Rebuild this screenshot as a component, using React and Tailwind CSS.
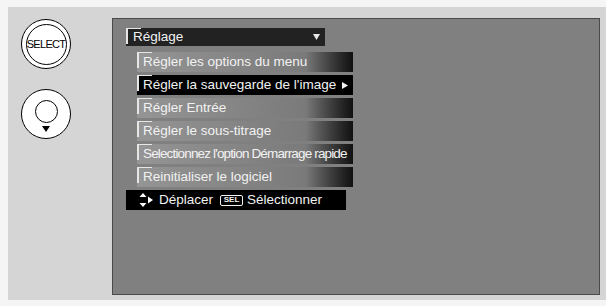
import React from "react";

const items = [
  { label: "Régler les options du menu" },
  { label: "Régler la sauvegarde de l'image", selected: true, arrow: true },
  { label: "Régler Entrée" },
  { label: "Régler le sous-titrage" },
  { label: "Selectionnez l'option Démarrage rapide", tight: true },
  { label: "Reinitialiser le logiciel" },
];

function SelectButton() {
  return (
    <div className="w-[50px] h-[50px] rounded-full border border-black bg-white flex items-center justify-center">
      <div className="w-[41px] h-[41px] rounded-full border-[1.5px] border-black flex items-center justify-center">
        <span className="text-[11px] tracking-[-0.7px] text-black font-['Liberation_Sans',Arial,sans-serif]">SELECT</span>
      </div>
    </div>
  );
}

function DownButton() {
  return (
    <div className="w-[50px] h-[50px] rounded-full border border-black bg-white flex flex-col items-center pt-[10px]">
      <div className="w-[23px] h-[23px] rounded-full border border-black" />
      <svg width="8" height="6" viewBox="0 0 8 6" className="mt-[3px]">
        <polygon points="0,0 8,0 4,6" fill="#000" />
      </svg>
    </div>
  );
}

// white corner bracket, top-left of each bar
function Bracket() {
  return (
    <>
      <span className="absolute left-0 top-0 w-[2px] h-[16px] bg-[#e6e6e6]" />
      <span className="absolute left-0 top-0 w-[15px] h-[1px] bg-[#e6e6e6]" />
    </>
  );
}

function MoveIcon() {
  return (
    <svg width="14" height="14" viewBox="0 0 14 14">
      <polygon points="4,0 7.5,4 0.5,4" fill="#fff" />
      <polygon points="0.5,10 7.5,10 4,14" fill="#fff" />
      <polygon points="9,3.5 14,7 9,10.5" fill="#fff" />
    </svg>
  );
}

export default function App() {
  return (
    <div className="w-[606px] h-[306px] bg-[#f5f5f5] pt-[7px] pl-[8px] pb-[6px] font-['Liberation_Sans',Arial,sans-serif]">
      <div className="h-full bg-[#d5d5d5] flex">
        <div className="w-[104px] flex flex-col items-start pl-[13px] pt-[12px] gap-[20px]">
          <SelectButton />
          <DownButton />
        </div>
        <div className="mt-[11px] mb-[5px] w-[488px] bg-[#808080] border border-[#4a4a4a] pt-[9px] pl-[13px]">
          <div className="relative w-[199px] h-[18px] bg-[#222222] flex items-center pl-[7px]">
            <Bracket />
            <span className="text-[13.5px] text-[#f2f2f2] leading-none">Réglage</span>
            <svg width="7" height="6" viewBox="0 0 7 6" className="ml-auto mr-[5px]">
              <polygon points="0,0 7,0 3.5,6" fill="#e8e8e8" />
            </svg>
          </div>
          <div className="ml-[11px] mt-[6px] flex flex-col gap-[3px]">
            {items.map((it) => (
              <div
                key={it.label}
                className={
                  it.selected
                    ? "relative w-[216px] h-[20px] bg-black flex items-center pl-[6px]"
                    : "relative w-[216px] h-[20px] bg-gradient-to-r from-[#959595] via-[#7a7a7a] via-[78%] to-[#111111] flex items-center pl-[6px]"
                }
              >
                <Bracket />
                <span
                  className={
                    it.tight
                      ? "text-[13.5px] tracking-[-0.85px] text-[#f2f2f2] leading-none whitespace-nowrap"
                      : "text-[13.5px] text-[#f2f2f2] leading-none whitespace-nowrap"
                  }
                >
                  {it.label}
                </span>
                {it.arrow && (
                  <svg width="6" height="7" viewBox="0 0 6 7" className="ml-[6px]">
                    <polygon points="0,0 6,3.5 0,7" fill="#f2f2f2" />
                  </svg>
                )}
              </div>
            ))}
          </div>
          <div className="mt-[3px] w-[220px] h-[20px] bg-black flex items-center pl-[13px] text-[13.5px] text-[#f2f2f2] leading-none">
            <MoveIcon />
            <span className="ml-[6px]">Déplacer</span>
            <span className="ml-[7px] w-[23px] h-[11px] border border-[#f2f2f2] rounded-[2px] flex items-center justify-center text-[8px] font-bold leading-none">
              SEL
            </span>
            <span className="ml-[4px]">Sélectionner</span>
          </div>
        </div>
      </div>
    </div>
  );
}
